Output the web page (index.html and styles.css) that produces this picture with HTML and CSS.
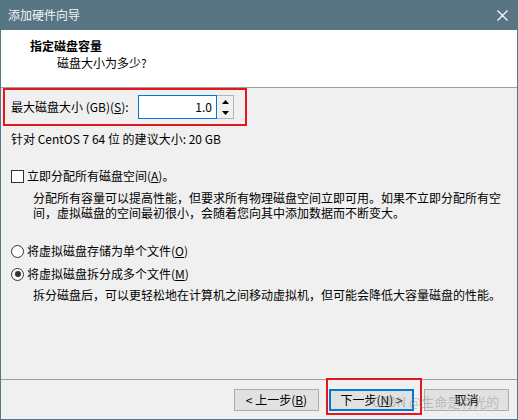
FILE: index.html
```html
<!DOCTYPE html>
<html lang="zh-CN">
<head>
<meta charset="utf-8">
<title>添加硬件向导</title>
<link rel="stylesheet" href="styles.css">
</head>
<body>
<div class="window">
  <div class="titlebar">
    <span class="title">添加硬件向导</span>
    <svg class="close" width="11" height="11" viewBox="0 0 11 11"><path d="M0.5 0.5 L10.5 10.5 M10.5 0.5 L0.5 10.5" stroke="#ffffff" stroke-width="1.2" fill="none"/></svg>
  </div>
  <div class="header">
    <div class="h-title">指定磁盘容量</div>
    <div class="h-sub">磁盘大小为多少?</div>
  </div>
  <div class="content">
    <div class="size-row">
      <span class="size-label">最大磁盘大小 (GB)(<u>S</u>):</span>
      <div class="spin">
        <div class="spin-input">1.0</div>
        <div class="spin-btns">
          <span class="spin-btn"><svg width="7" height="4" viewBox="0 0 7 4"><path d="M0 4 L3.5 0 L7 4 Z" fill="#000"/></svg></span>
          <span class="spin-btn"><svg width="7" height="4" viewBox="0 0 7 4"><path d="M0 0 L7 0 L3.5 4 Z" fill="#000"/></svg></span>
        </div>
      </div>
    </div>
    <div class="recommend">针对 CentOS 7 64 位 的建议大小: 20 GB</div>
    <div class="option check-opt"><span class="checkbox"></span><span>立即分配所有磁盘空间(<u>A</u>)。</span></div>
    <p class="desc desc-check">分配所有容量可以提高性能，但要求所有物理磁盘空间立即可用。如果不立即分配所有空间，虚拟磁盘的空间最初很小，会随着您向其中添加数据而不断变大。</p>
    <div class="option radio-opt-1"><span class="radio"></span><span>将虚拟磁盘存储为单个文件(<u>O</u>)</span></div>
    <div class="option radio-opt-2"><span class="radio checked"><span class="dot"></span></span><span>将虚拟磁盘拆分成多个文件(<u>M</u>)</span></div>
    <p class="desc desc-radio">拆分磁盘后，可以更轻松地在计算机之间移动虚拟机，但可能会降低大容量磁盘的性能。</p>
  </div>
  <div class="footer">
    <button class="btn">&lt; 上一步(<u>B</u>)</button>
    <button class="btn btn-default">下一步(<u>N</u>) &gt;</button>
    <button class="btn">取消</button>
  </div>
  <div class="mark next-mark"></div>
  <div class="watermark">CSDN @生命是有光的</div>
</div>
</body>
</html>
```

FILE: styles.css
```css
* { box-sizing: border-box; }
html, body {
  margin: 0;
  padding: 0;
  background: #f0f0f0;
}
body {
  font-family: "Noto Sans CJK SC", "Noto Sans", sans-serif;
  font-size: 12px;
  color: #000;
}
.window {
  position: relative;
  width: 518px;
  height: 420px;
  display: flex;
  flex-direction: column;
  background: #f0f0f0;
  border-left: 1px solid #587584;
  border-right: 1px solid #587584;
  border-bottom: 1px solid #587584;
}
.titlebar {
  height: 30px;
  margin: 0 -1px;
  background: #587584;
  color: #f4f6f7;
  display: flex;
  align-items: center;
  justify-content: space-between;
  padding: 0 10px 0 8px;
  flex: none;
}
.title {
  font-size: 12px;
  line-height: 16px;
}
.close { display: block; }
.header {
  height: 58px;
  background: #fff;
  border-bottom: 1px solid #a0a0a0;
  padding-top: 8px;
  flex: none;
}
.h-title {
  font-weight: bold;
  line-height: 16px;
  padding-left: 29px;
}
.h-sub {
  line-height: 16px;
  margin-top: 1px;
  padding-left: 56px;
}
.content {
  flex: 1;
  padding-left: 10px;
}
.size-row {
  margin-left: -8px;
  width: 244px;
  height: 38px;
  border: 2px solid #e5161d;
  padding-left: 6px;
  display: flex;
  align-items: center;
}
.size-label {
  width: 127px;
  flex: none;
  line-height: 16px;
  white-space: nowrap;
}
.spin {
  display: flex;
  height: 24px;
}
.spin-input {
  width: 79px;
  height: 24px;
  background: #fff;
  border: 1px solid #0078d7;
  text-align: right;
  padding-right: 4px;
  line-height: 21px;
}
.spin-btns {
  width: 17px;
  height: 24px;
  border: 1px solid #b4b4b4;
  border-left: none;
  display: flex;
  flex-direction: column;
  background: #f0f0f0;
}
.spin-btn {
  flex: 1;
  display: flex;
  align-items: center;
  justify-content: center;
}
.spin-btn svg { display: block; }
.recommend {
  margin-top: 5px;
  line-height: 16px;
}
.option {
  display: flex;
  align-items: center;
  gap: 3px;
  line-height: 16px;
  height: 16px;
}
.check-opt { margin-top: 21px; }
.checkbox {
  width: 13px;
  height: 13px;
  border: 1px solid #333;
  background: #fff;
  flex: none;
}
.desc {
  margin: 0;
  padding-left: 22px;
  line-height: 15px;
  width: 494px;
}
.desc-check { margin-top: 6px; }
.radio-opt-1 { margin-top: 23px; }
.radio-opt-2 { margin-top: 7px; }
.desc-radio { margin-top: 5px; }
.radio {
  width: 13px;
  height: 13px;
  border: 1px solid #333;
  border-radius: 50%;
  background: #fff;
  flex: none;
  display: flex;
  align-items: center;
  justify-content: center;
}
.dot {
  width: 6px;
  height: 6px;
  border-radius: 50%;
  background: #333;
}
.footer {
  height: 40px;
  border-top: 1px solid #a0a0a0;
  padding: 9px 8px 0 0;
  display: flex;
  justify-content: flex-end;
  gap: 10px;
  flex: none;
}
.btn {
  width: 85px;
  height: 22px;
  margin: 0;
  padding: 0;
  background: #e1e1e1;
  border: 1px solid #adadad;
  font-family: "Noto Sans CJK SC", "Noto Sans", sans-serif;
  font-size: 12px;
  line-height: 16px;
  color: #000;
}
.btn-default {
  border: 2px solid #0078d7;
}
.mark {
  position: absolute;
  border: 2px solid #e5161d;
}
.next-mark {
  left: 325px;
  top: 378px;
  width: 96px;
  height: 37px;
}
.watermark {
  position: absolute;
  left: 371px;
  top: 394px;
  font-size: 13px;
  line-height: 16px;
  color: rgba(150, 150, 150, 0.55);
  white-space: nowrap;
  pointer-events: none;
}
```
